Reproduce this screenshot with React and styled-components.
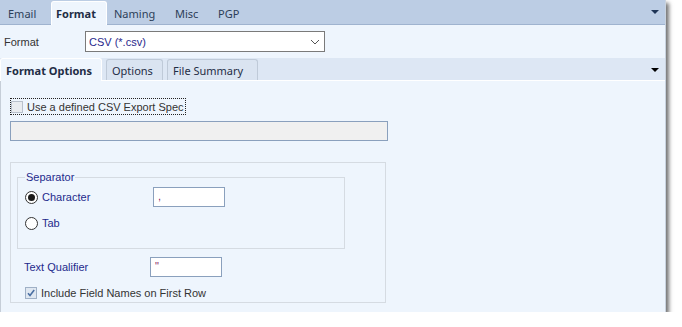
import React from 'react'
import styled, { createGlobalStyle } from 'styled-components'

const GlobalStyle = createGlobalStyle`
    body {
        margin: 0;
        background: #ffffff;
        font-family: "Liberation Sans", Arial, sans-serif;
    }
`

const Window = styled.div`
    width: 666px;
    height: 312px;
    display: flex;
    flex-direction: column;
    background: #eef5fd;
    box-shadow: 3px 3px 4px rgba(0, 0, 0, 0.55);
    border-right: 1px solid #c9d3df;
    box-sizing: border-box;
`

const TopBar = styled.div`
    height: 25px;
    flex: none;
    display: flex;
    align-items: flex-end;
    background: #bccde4;
    border-bottom: 1px solid #9fb3cf;
    box-sizing: border-box;
    padding-left: 2px;
    position: relative;
`

const TopTab = styled.div`
    width: ${({ w }) => w}px;
    height: ${({ active }) => (active ? '24px' : '22px')};
    margin-bottom: ${({ active }) => (active ? '-1px' : '0')};
    padding-left: ${({ pad }) => pad || 5}px;
    display: flex;
    align-items: center;
    font-family: "Noto Sans", "Open Sans", sans-serif;
    font-size: 11px;
    font-weight: ${({ active }) => (active ? 700 : 400)};
    color: ${({ active }) => (active ? '#1f2d45' : '#2c3e58')};
    background: ${({ active }) => (active ? '#eef5fd' : 'transparent')};
    border: 1px solid ${({ active }) => (active ? '#ffffff' : 'transparent')};
    border-bottom: none;
    border-radius: 3px 3px 0 0;
    box-sizing: border-box;
`

const BarArrow = styled.div`
    position: absolute;
    right: 6px;
    top: 10px;
    width: 0;
    height: 0;
    border-left: 4px solid transparent;
    border-right: 4px solid transparent;
    border-top: 4px solid ${({ color }) => color};
`

const FormatRow = styled.div`
    height: 33px;
    flex: none;
    display: flex;
    align-items: center;
    padding-left: 4px;
    font-size: 11px;
    color: #333333;
`

const FormatLabel = styled.span`
    width: 81px;
`

const Select = styled.div`
    width: 240px;
    height: 21px;
    box-sizing: border-box;
    border: 1px solid #7a7a7a;
    background: #ffffff;
    display: flex;
    align-items: center;
    justify-content: space-between;
    padding: 0 4px 0 3px;
    color: #2a2a8c;
    font-size: 11px;
`

const SubBar = styled.div`
    height: 23px;
    flex: none;
    display: flex;
    align-items: flex-end;
    gap: 4px;
    background: #dde7f4;
    border-bottom: 1px solid #ffffff;
    box-sizing: border-box;
    position: relative;
`

const SubTab = styled.div`
    width: ${({ w }) => w}px;
    height: ${({ active }) => (active ? '23px' : '21px')};
    margin-bottom: ${({ active }) => (active ? '-1px' : '0')};
    box-sizing: border-box;
    display: flex;
    align-items: center;
    padding-left: ${({ active }) => (active ? 5 : 5)}px;
    font-family: "Noto Sans", "Open Sans", sans-serif;
    font-size: 11px;
    font-weight: ${({ active }) => (active ? 700 : 400)};
    color: #1f2d45;
    background: ${({ active }) => (active ? '#eef5fd' : '#dae4f1')};
    border: 1px solid ${({ active }) => (active ? '#ffffff' : '#bfcad8')};
    border-bottom: none;
    border-radius: 3px 3px 0 0;
`

const Content = styled.div`
    flex: 1;
    display: flex;
    flex-direction: column;
    padding: 17px 0 0 9px;
    border-left: 1px solid #c6ced8;
`

const CheckRow = styled.label`
    display: flex;
    align-items: center;
    gap: 4px;
    height: 15px;
    font-size: 11px;
    color: #333333;
    align-self: flex-start;
    padding-right: 1px;
    border: 1px dotted #222;
`

const Box = styled.span`
    width: 12px;
    height: 12px;
    box-sizing: border-box;
    border: 1px solid ${({ checked }) => (checked ? '#9fb0c6' : '#b9c1cc')};
    background: ${({ checked }) => (checked ? '#dfe7f1' : '#e9ecf0')};
    display: flex;
    align-items: center;
    justify-content: center;
`

const SpecInput = styled.div`
    margin-top: 6px;
    width: 378px;
    height: 20px;
    box-sizing: border-box;
    background: #f0f0f0;
    border: 1px solid #8aa0bd;
`

const Group = styled.div`
    margin-top: 21px;
    width: 376px;
    height: 141px;
    box-sizing: border-box;
    border: 1px solid #d5dbe2;
    padding: 8px 0 0 6px;
    display: flex;
    flex-direction: column;
`

const Fieldset = styled.fieldset`
    margin: 0;
    width: 328px;
    height: 78px;
    box-sizing: border-box;
    border: 1px solid #d5dbe2;
    padding: 0 0 0 7px;
    display: flex;
    flex-direction: column;
`

const Legend = styled.legend`
    font-size: 11px;
    color: #1e2a8c;
    padding: 0 1px;
    margin-left: 0;
    line-height: 12px;
`

const OptionRow = styled.div`
    display: flex;
    align-items: center;
    height: ${({ h }) => h}px;
    margin-top: ${({ mt }) => mt || 0}px;
    padding-left: ${({ pl }) => pl || 0}px;
`

const Radio = styled.span`
    width: 13px;
    height: 13px;
    box-sizing: border-box;
    border-radius: 50%;
    border: 1px solid #333333;
    background: #ffffff;
    display: flex;
    align-items: center;
    justify-content: center;
    margin-right: 4px;

    &::after {
        content: '';
        width: 7px;
        height: 7px;
        border-radius: 50%;
        background: ${({ checked }) => (checked ? '#1a1a1a' : 'transparent')};
    }
`

const BlueLabel = styled.span`
    font-size: 11px;
    color: #1e2a8c;
    width: ${({ w }) => (w ? `${w}px` : 'auto')};
`

const SmallInput = styled.div`
    width: 72px;
    height: 20px;
    box-sizing: border-box;
    border: 1px solid #8aa0bd;
    background: #ffffff;
    font-size: 11px;
    color: #8a2a6a;
    padding: 2px 0 0 4px;
    line-height: 12px;
`

const CheckLabel = styled.span`
    font-size: 11px;
    color: #333333;
    margin-left: 4px;
`

const Check = () => (
    <svg width="10" height="10" viewBox="0 0 10 10">
        <path d="M2 5.2 L4 7.5 L8.2 2" fill="none" stroke="#4a6fa3" strokeWidth="1.6" />
    </svg>
)

const Chevron = () => (
    <svg width="10" height="6" viewBox="0 0 10 6">
        <path d="M1 1 L5 5 L9 1" fill="none" stroke="#555" strokeWidth="1" />
    </svg>
)

export default function App() {
    return (
        <>
            <GlobalStyle />
            <Window>
                <TopBar>
                    <TopTab w={49} pad={5}>Email</TopTab>
                    <TopTab active w={56} pad={4}>Format</TopTab>
                    <TopTab w={61} pad={6}>Naming</TopTab>
                    <TopTab w={43} pad={6}>Misc</TopTab>
                    <TopTab w={40} pad={6}>PGP</TopTab>
                    <BarArrow color="#1f3556" />
                </TopBar>
                <FormatRow>
                    <FormatLabel>Format</FormatLabel>
                    <Select>
                        CSV (*.csv)
                        <Chevron />
                    </Select>
                </FormatRow>
                <SubBar>
                    <SubTab active w={102}>Format Options</SubTab>
                    <SubTab w={57}>Options</SubTab>
                    <SubTab w={91}>File Summary</SubTab>
                    <BarArrow color="#000000" />
                </SubBar>
                <Content>
                    <CheckRow>
                        <Box />
                        Use a defined CSV Export Spec
                    </CheckRow>
                    <SpecInput />
                    <Group>
                        <Fieldset>
                            <Legend>Separator</Legend>
                            <OptionRow h={22} mt={3}>
                                <Radio checked />
                                <BlueLabel w={111}>Character</BlueLabel>
                                <SmallInput>,</SmallInput>
                            </OptionRow>
                            <OptionRow h={22} mt={4}>
                                <Radio />
                                <BlueLabel>Tab</BlueLabel>
                            </OptionRow>
                        </Fieldset>
                        <OptionRow h={20} mt={8} pl={7}>
                            <BlueLabel w={126}>Text Qualifier</BlueLabel>
                            <SmallInput>"</SmallInput>
                        </OptionRow>
                        <OptionRow h={16} mt={8} pl={8}>
                            <Box checked>
                                <Check />
                            </Box>
                            <CheckLabel>Include Field Names on First Row</CheckLabel>
                        </OptionRow>
                    </Group>
                </Content>
            </Window>
        </>
    )
}
